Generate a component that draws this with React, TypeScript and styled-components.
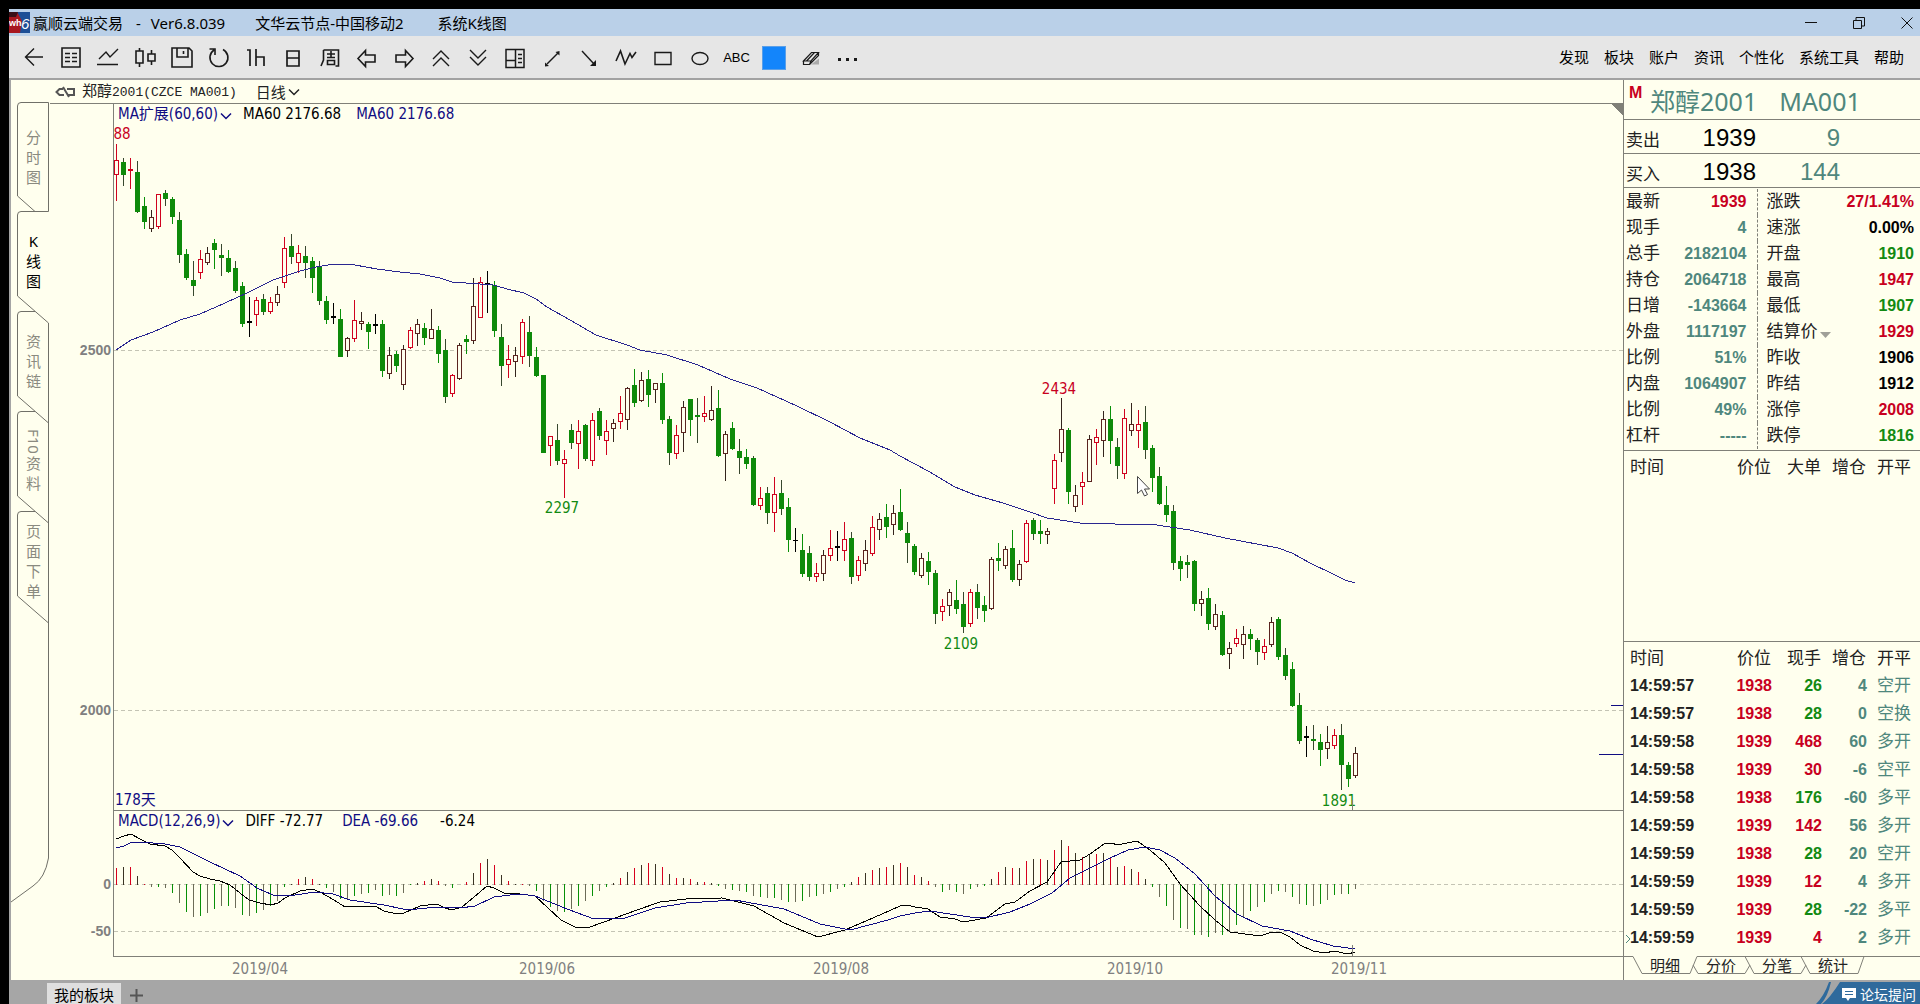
import React from 'react';
import styled, { createGlobalStyle, css } from 'styled-components';

const sans = `"Noto Sans", "Noto Sans CJK SC", sans-serif`;
const tahoma = `"DejaVu Sans Condensed", "DejaVu Sans", "Noto Sans CJK SC", sans-serif`;
const arial = `"Liberation Sans", "Noto Sans CJK SC", sans-serif`;

const color = {
  paper: '#ffffee',
  rule: '#808078',
  red: '#c8001e',
  green: '#128a12',
  teal: '#4f877d',
  navy: '#100c82',
  ink: '#222222',
  black: '#000000',
  dim: '#8a8a80',
};

type Tone = 'red' | 'green' | 'teal' | 'black' | 'ink';

/* ---------- chart data ---------- */

// [high, body top, body bottom, low, kind]; thirds of a pixel below the block's base
type Bar = [number, number, number, number, 'r' | 'g' | 'k'];

const blocks: { base: number; bars: Bar[] }[] = [
  {
    base: 120,
    bars: [
      [72, 121, 163, 240, 'r'], [115, 127, 163, 195, 'g'], [114, 147, 150, 204, 'r'], [123, 156, 273, 277, 'g'],
      [232, 259, 303, 324, 'g'], [271, 291, 326, 333, 'r'], [222, 222, 318, 324, 'r'], [211, 220, 234, 255, 'g'],
      [232, 238, 288, 309, 'g'], [277, 300, 402, 427, 'g'], [388, 403, 471, 477, 'g'], [423, 481, 495, 525, 'g'],
      [391, 418, 456, 474, 'r'], [381, 400, 426, 432, 'r'], [358, 370, 387, 444, 'g'], [373, 406, 412, 465, 'g'],
      [391, 415, 453, 456, 'g'], [423, 444, 510, 516, 'g'], [487, 499, 609, 619, 'g'], [531, 604, 606, 649, 'k'],
      [532, 541, 584, 615, 'r'], [523, 538, 573, 582, 'g'], [532, 547, 573, 579, 'r'], [499, 523, 546, 555, 'r'],
      [352, 385, 486, 501, 'r'], [343, 379, 408, 429, 'g'], [376, 400, 426, 456, 'r'], [379, 409, 426, 471, 'g'],
      [411, 424, 471, 516, 'g'], [424, 439, 540, 552, 'g'], [529, 544, 597, 609, 'g'], [550, 589, 591, 609, 'k'],
      [568, 598, 708, 708, 'g'], [652, 655, 692, 709, 'r'], [541, 601, 654, 664, 'r'], [577, 604, 611, 627, 'r'],
      [606, 613, 633, 686, 'g'], [583, 612, 615, 640, 'k'], [600, 613, 750, 769, 'g'], [682, 706, 759, 775, 'r'],
      [694, 703, 735, 754, 'g'], [676, 688, 793, 808, 'r'], [622, 631, 681, 684, 'r'], [598, 613, 640, 675, 'r'],
      [610, 625, 651, 672, 'g'], [568, 628, 654, 656, 'r'], [619, 631, 699, 727, 'g'], [658, 691, 828, 847, 'g'],
      [762, 766, 819, 828, 'r'], [670, 676, 776, 778, 'r'], [646, 658, 665, 699, 'g'], [475, 559, 662, 669, 'r'],
      [472, 487, 591, 592, 'r'], [454, 491, 494, 577, 'k'], [484, 496, 630, 648, 'g'], [613, 652, 735, 796, 'g'],
      [676, 718, 732, 772, 'r'], [682, 706, 723, 769, 'r'], [598, 607, 708, 729, 'r'], [589, 637, 705, 739, 'g'],
      [682, 712, 766, 769, 'g'],
    ],
  },
  {
    base: 240,
    bars: [
      [406, 406, 636, 636, 'g'], [589, 589, 615, 676, 'r'], [553, 601, 661, 672, 'g'], [631, 659, 669, 772, 'r'],
      [553, 570, 607, 625, 'g'], [541, 574, 609, 684, 'r'], [553, 556, 655, 661, 'g'], [519, 541, 661, 677, 'r'],
      [505, 514, 585, 598, 'g'], [541, 574, 601, 642, 'r'], [538, 550, 565, 604, 'r'], [468, 520, 543, 565, 'r'],
      [442, 445, 538, 568, 'r'], [387, 436, 487, 499, 'g'], [397, 421, 481, 483, 'r'], [391, 418, 462, 499, 'g'],
      [430, 430, 448, 487, 'r'], [400, 430, 538, 550, 'g'], [529, 538, 636, 672, 'g'], [556, 586, 640, 656, 'r'],
      [484, 502, 577, 634, 'r'], [478, 478, 538, 586, 'g'], [474, 526, 530, 607, 'g'], [469, 520, 529, 544, 'r'],
      [439, 511, 538, 541, 'r'], [451, 505, 645, 649, 'g'], [574, 583, 640, 721, 'r'], [546, 565, 625, 628, 'g'],
      [598, 634, 652, 700, 'g'], [628, 651, 669, 685, 'g'], [649, 655, 793, 796, 'g'], [742, 775, 796, 808, 'r'],
      [742, 760, 816, 850, 'g'], [712, 764, 817, 875, 'r'], [721, 760, 804, 823, 'g'], [775, 802, 898, 935, 'g'],
      [865, 900, 902, 935, 'k'], [883, 930, 1000, 1010, 'g'], [920, 940, 1010, 1020, 'g'], [970, 1000, 1010, 1025, 'r'],
      [930, 945, 1000, 1020, 'r'], [871, 925, 945, 960, 'r'], [873, 920, 922, 960, 'k'], [847, 898, 930, 960, 'r'],
      [877, 894, 1010, 1030, 'g'], [950, 960, 1005, 1020, 'r'], [900, 930, 970, 990, 'r'], [829, 862, 940, 945, 'r'],
      [820, 839, 868, 898, 'r'], [793, 832, 858, 892, 'g'], [796, 821, 853, 884, 'r'], [748, 817, 868, 871, 'g'],
    ],
  },
  {
    base: 360,
    bars: [
      [487, 520, 547, 607, 'g'], [553, 559, 633, 643, 'g'], [580, 595, 647, 653, 'r'], [576, 604, 633, 674, 'g'],
      [631, 640, 760, 791, 'g'], [718, 738, 754, 782, 'r'], [688, 697, 737, 767, 'r'], [661, 721, 744, 760, 'g'],
      [697, 733, 799, 817, 'g'], [688, 697, 789, 799, 'r'], [673, 697, 741, 775, 'g'], [709, 737, 751, 785, 'g'],
      [592, 598, 745, 748, 'r'], [550, 596, 600, 631, 'g'], [559, 568, 616, 625, 'r'], [511, 565, 657, 664, 'g'],
      [601, 613, 658, 676, 'r'], [481, 490, 604, 606, 'r'], [475, 481, 520, 538, 'g'], [481, 515, 521, 550, 'g'],
      [505, 515, 523, 550, 'r'], [282, 301, 385, 430, 'r'], [115, 208, 277, 303, 'r'], [205, 211, 394, 430, 'g'],
      [376, 406, 438, 454, 'r'], [337, 367, 379, 433, 'r'], [226, 238, 363, 364, 'r'], [208, 232, 246, 313, 'r'],
      [153, 178, 241, 289, 'r'], [139, 178, 241, 310, 'g'], [235, 262, 316, 355, 'g'], [148, 175, 340, 355, 'r'],
      [129, 193, 210, 226, 'r'], [151, 193, 210, 262, 'r'], [139, 187, 267, 294, 'g'], [256, 265, 352, 394, 'g'],
      [322, 349, 430, 433, 'g'], [379, 436, 462, 483, 'g'], [436, 454, 606, 628, 'g'], [589, 604, 625, 661, 'g'],
      [586, 608, 614, 651, 'g'], [601, 604, 730, 751, 'g'], [694, 718, 730, 767, 'r'], [685, 715, 790, 808, 'g'],
      [733, 763, 799, 807, 'r'], [754, 766, 883, 886, 'g'],
    ],
  },
  {
    base: 540,
    bars: [
      [307, 326, 340, 386, 'r'], [268, 295, 310, 319, 'r'], [259, 283, 314, 355, 'r'], [268, 284, 295, 328, 'g'],
      [295, 301, 335, 374, 'g'], [297, 320, 338, 358, 'r'], [232, 248, 313, 319, 'r'], [232, 237, 349, 358, 'g'],
      [325, 347, 406, 418, 'g'], [367, 388, 496, 499, 'g'], [460, 497, 601, 610, 'g'], [559, 588, 591, 648, 'k'],
      [556, 597, 601, 628, 'g'], [583, 608, 629, 677, 'g'], [559, 608, 626, 654, 'r'], [568, 587, 617, 626, 'r'],
      [553, 587, 674, 748, 'g'], [668, 677, 716, 740, 'g'], [623, 641, 707, 713, 'r'],
    ],
  },
];

const histogram = [
  52, 55, 55, 28, 4, -10, -10, -13, -26, -56, -83, -100, -97, -86, -74, -67, -67, -73, -92, -97, -86, -77, -65, -50, -10,
  4, 19, 25, 19, 4, -13, -23, -46, -47, -37, -29, -26, -17, -35, -33, -35, -26, -4, 6, 13, 19, 13, -7, -13, 0, 10, 37, 65,
  79, 61, 31, 13, 4, 4, -6, -20, -50, -70, -80, -85, -75, -65, -50, -35, -20, -8, 6, 20, 38, 50, 60, 66, 64, 54, 32, 20,
  20, 18, 10, 8, 6, -6, -15, -18, -20, -25, -35, -40, -42, -42, -48, -54, -54, -50, -40, -35, -30, -25, -15, -8, 10, 25,
  35, 45, 50, 55, 60, 65, 55, 31, 25, 13, -10, -23, -19, -23, -31, -16, -10, -7, 19, 40, 55, 52, 52, 73, 79, 79, 76, 106,
  136, 118, 97, 85, 91, 94, 97, 82, 55, 58, 49, 40, 19, -8, -40, -67, -107, -131, -136, -154, -154, -160, -148, -154,
  -144, -124, -103, -82, -70, -55, -29, -22, -25, -40, -61, -64, -65, -61, -49, -34, -31, -31, -16,
];

const ma60 =
  '116,350 131,340 153,332 180,320 200,314 225,303 247,293 273,280 300,271 316,267 334,264 355,265 377,269 400,272 420,274 440,278 452,282 480,284 490,284 507,289 524,293 536,299 547,307 570,320 596,335 627,345 640,350 667,355 698,365 730,379 757,388 797,406 830,422 860,438 890,450 900,456 928,471 955,487 975,495 1003,503 1030,512 1047,518 1080,523 1100,523 1130,525 1150,524 1190,530 1225,538 1278,548 1292,553 1310,563 1333,574 1345,580 1355,583';
const diff =
  '116,839 124,836 131,834 140,839 150,844 165,846 172,850 180,858 193,872 200,876 210,879 220,881 230,885 240,893 249,900 260,903 271,905 278,903 285,898 300,891 312,889 320,892 334,900 345,907 365,906 375,906 384,911 397,914 404,913 420,906 437,904 445,908 452,910 462,907 468,902 480,892 487,886 494,888 504,893 520,894 535,896 561,920 575,927 587,928 604,922 637,910 660,902 686,899 722,898 754,906 784,923 818,937 845,930 882,914 900,906 907,905 915,907 928,909 940,917 955,919 963,922 975,920 986,918 1005,904 1015,902 1030,891 1047,882 1061,862 1080,860 1090,854 1104,844 1112,843 1117,845 1137,841 1150,850 1165,863 1180,884 1200,906 1215,920 1230,932 1245,934 1260,936 1272,932 1282,933 1290,937 1300,945 1313,951 1325,953 1334,951 1348,954 1355,952';
const dea =
  '116,848 124,846 130,843 140,842 165,844 180,847 210,862 240,876 257,888 273,895 295,895 315,892 333,894 350,900 384,905 403,909 417,909 437,907 460,908 475,906 494,897 510,895 520,894 535,896 567,909 594,919 625,918 655,908 686,903 735,900 784,909 820,924 850,930 888,920 900,916 915,913 930,911 970,917 985,918 1010,912 1030,904 1052,893 1070,878 1090,868 1110,858 1128,850 1145,847 1160,850 1175,858 1195,874 1215,896 1237,914 1262,926 1290,931 1310,939 1333,946 1348,948 1355,949';

const bars = blocks.flatMap(({ base, bars: list }) =>
  list.map(([high, top, bottom, low, kind]) => ({
    high: Math.floor(base + high / 3),
    top: Math.floor(base + top / 3),
    bottom: Math.floor(base + bottom / 3),
    low: Math.floor(base + low / 3),
    kind,
  })),
);

const barX = (i: number) => 116 + 7 * i;

/* ---------- page ---------- */

const GlobalStyle = createGlobalStyle`
  * { box-sizing: border-box; }
  body { margin: 0; background: #000; }
  button, select, input { font: inherit; color: inherit; background: none; border: 0; padding: 0; margin: 0; }
  svg { display: block; }
`;

const Frame = styled.div`
  display: flex;
  flex-direction: column;
  min-height: 100vh;
  padding: 9px 0 0 9px;
  background: #000;
  color: ${color.black};
  font: 15px/20px ${sans};
  overflow: hidden;
`;

const TitleBar = styled.header`
  display: flex;
  align-items: center;
  height: 27px;
  background: #bad0e8;
  white-space: pre;
`;

const TitleText = styled.span<{ $gap: number }>`
  margin-left: ${(p) => p.$gap}px;
`;

const WindowButtons = styled.div`
  display: flex;
  gap: 36px;
  margin-left: auto;
  padding-right: 7px;
`;

const ToolBar = styled.nav`
  display: flex;
  align-items: center;
  justify-content: space-between;
  height: 44px;
  padding: 2px 16px 0 6px;
  background: #e6e6e6;
  border-bottom: 2px solid #a2a2a2;
`;

const ToolList = styled.div`
  display: flex;
`;

const Tool = styled.button`
  display: flex;
  align-items: center;
  justify-content: center;
  width: 37px;
  height: 32px;
`;

const ToolWord = styled.span`
  font: 13px/20px ${arial};
`;

const Swatch = styled.span`
  width: 24px;
  height: 24px;
  background: #1385fb;
  border: 1px solid #5a9fe8;
`;

const Menu = styled.div`
  display: flex;
  gap: 15px;
  padding-bottom: 3px;
`;

const Workspace = styled.main`
  display: flex;
  background: ${color.paper};
  border-left: 2px solid #a4a4a4;
`;

const Side = styled.aside`
  position: relative;
  flex: none;
  width: 39px;
  padding-top: 22px;
`;

const SideOutline = styled.svg`
  position: absolute;
  top: 0;
  left: 0;
`;

const SideTab = styled.button<{ $active?: boolean; $first?: boolean }>`
  position: relative;
  display: flex;
  flex-direction: column;
  align-items: center;
  justify-content: center;
  width: 100%;
  height: ${(p) => (p.$first ? 109 : 100)}px;
  padding-left: 6px;
  font-size: 15px;
  line-height: 20px;
  color: ${(p) => (p.$active ? color.black : color.dim)};
`;

const Rotated = styled.span`
  writing-mode: vertical-rl;
  font-size: 15px;
`;

const ChartColumn = styled.section`
  flex: 1;
  min-width: 0;
`;

const ChartHeader = styled.div`
  display: flex;
  align-items: center;
  height: 24px;
  padding-left: 5px;
  border-bottom: 1px solid ${color.rule};
  color: ${color.ink};
`;

const Contract = styled.span`
  margin: 0 19px 0 6px;
  white-space: pre;
`;

const Mono = styled.span`
  font-family: 'Liberation Mono', monospace;
  font-size: 13px;
`;

const Period = styled.select`
  appearance: none;
  width: 32px;
`;

const Pane = styled.div<{ $height: number }>`
  position: relative;
  height: ${(p) => p.$height}px;
  overflow: hidden;
`;

const Plot = styled.svg`
  width: 100%;
  height: 100%;
`;

const Legend = styled.div`
  position: absolute;
  top: 0;
  left: 68px;
  display: flex;
  font: 15px/20px ${tahoma};
  white-space: pre;
`;

const LegendName = styled.button`
  display: flex;
  align-items: center;
  gap: 2px;
  color: ${color.navy};
  svg {
    margin-top: 4px;
  }
`;

const LegendValue = styled.span<{ $gap: number; $navy?: boolean }>`
  margin-left: ${(p) => p.$gap}px;
  color: ${(p) => (p.$navy ? color.navy : color.black)};
`;

const Quote = styled.section`
  display: flex;
  flex-direction: column;
  flex: none;
  width: 297px;
  border-left: 1px solid ${color.rule};
  font-size: 17px;
  color: ${color.ink};
`;

const QuoteTitle = styled.h1`
  display: flex;
  align-items: center;
  gap: 22px;
  height: 40px;
  margin: 0;
  padding: 3px 0 0 5px;
  border-bottom: 1px solid ${color.rule};
  font: 25px/34px ${sans};
  color: ${color.teal};
`;

const MainMark = styled.span`
  align-self: flex-start;
  width: 12px;
  margin-right: -13px;
  font: bold 16px/20px ${arial};
  color: ${color.red};
`;

const PriceLine = styled.div`
  display: flex;
  align-items: center;
  height: 34px;
  padding: 2px 0 0 2px;
  border-bottom: 1px solid ${color.rule};
  font-family: ${arial};
`;

const PriceLabel = styled.span`
  width: 40px;
  padding-top: 6px;
`;

const PriceFigure = styled.span<{ $width: number; $tone: Tone }>`
  width: ${(p) => p.$width}px;
  text-align: right;
  font-size: 24px;
  line-height: 32px;
  color: ${(p) => color[p.$tone]};
`;

const DataTable = styled.table`
  width: 100%;
  table-layout: fixed;
  border-collapse: collapse;
  font-family: ${arial};
  th,
  td {
    padding: 0;
    font-weight: normal;
    text-align: left;
    white-space: nowrap;
  }
`;

const Col = styled.col<{ $width?: number }>`
  width: ${(p) => (p.$width ? `${p.$width}px` : 'auto')};
`;

const QuoteBox = styled.div`
  padding: 1px 0;
`;

const QuoteRow = styled.tr`
  height: 26px;
`;

const QuoteLabel = styled.th`
  && {
    padding-left: 2px;
  }
  & + td + & {
    padding-left: 9px;
  }
`;

const figure = css<{ $tone: Tone }>`
  && {
    text-align: right;
    font-weight: bold;
    font-size: 16px;
    color: ${(p) => color[p.$tone]};
  }
`;

const QuoteValue = styled.td<{ $divider?: boolean; $tone: Tone }>`
  ${figure}
  && {
    padding-right: ${(p) => (p.$divider ? 10 : 6)}px;
    border-right: ${(p) => (p.$divider ? `1px dashed ${color.rule}` : '0')};
  }
`;

const Settle = styled.button`
  display: flex;
  align-items: center;
  gap: 2px;
`;

const Ticks = styled.div<{ $height?: number }>`
  height: ${(p) => (p.$height ? `${p.$height}px` : 'auto')};
  padding-top: 2px;
  border-top: 1px solid ${color.rule};
`;

const TickRow = styled.tr`
  height: 28px;
`;

const TickCell = styled.td<{ $tone: Tone }>`
  ${figure}
`;

const TickTime = styled.td`
  && {
    position: relative;
    padding-left: 6px;
    font-weight: bold;
    font-size: 16px;
  }
`;

const Pointer = styled.svg`
  position: absolute;
  top: 10px;
  left: 1px;
`;

const TickHead = styled.th<{ $align: 'left' | 'right' }>`
  && {
    padding: ${(p) => (p.$align === 'left' ? '2px 0 0 6px' : '2px 1px 0 0')};
    text-align: ${(p) => p.$align};
  }
`;

const Kind = styled.td`
  && {
    padding-left: 10px;
    color: ${color.teal};
  }
`;

const KindHead = styled.th`
  && {
    padding: 2px 0 0 10px;
  }
`;

const TabStrip = styled.div`
  position: relative;
  display: flex;
  height: 24px;
  margin-top: auto;
  padding-left: 13px;
  font-size: 15px;
`;

const TabOutline = styled.svg`
  position: absolute;
  top: 0;
  left: 0;
`;

const Tab = styled.button`
  position: relative;
  width: 56px;
  height: 18px;
  line-height: 18px;
`;

const Footer = styled.footer`
  display: flex;
  justify-content: space-between;
  flex: 1;
  min-height: 24px;
  padding-left: 38px;
  background: #a6a6a6;
`;

const Boards = styled.div`
  display: flex;
  align-items: flex-end;
  gap: 9px;
`;

const BoardTab = styled.button`
  height: 21px;
  padding: 4px 7px 0;
  line-height: 17px;
  background: #dfdfdf;
`;

const AddBoard = styled.button`
  padding-bottom: 2px;
`;

const Forum = styled.button`
  position: relative;
  align-self: flex-end;
`;

const ForumShape = styled.svg`
  position: absolute;
  inset: 0;
  width: 100%;
  height: 100%;
`;

const ForumLabel = styled.span`
  position: relative;
  display: flex;
  align-items: center;
  gap: 4px;
  height: 22px;
  padding: 4px 4px 0 26px;
  font-size: 14px;
  line-height: 16px;
  color: #fff;
`;

/* ---------- small drawings ---------- */

const Chevron = ({ stroke = '#222' }: { stroke?: string }) => (
  <svg width="12" height="8" fill="none" stroke={stroke} strokeWidth="1.5">
    <path d="M1 1.5 6 6.5 11 1.5" />
  </svg>
);

const Icon = ({ children, width = 1.4 }: { children: React.ReactNode; width?: number }) => (
  <svg width="24" height="24" viewBox="0 0 24 24" fill="none" stroke="#1a1a1a" strokeWidth={width}>
    {children}
  </svg>
);

const tools: [string, React.ReactNode][] = [
  ['返回', <Icon><path d="M21 11H4M12 2.500L3.500 11 12 19.500" /></Icon>],
  ['报价', <Icon width={1.6}><path d="M3 2h18v19H3zM6 7.500h5M13 7.500h5M6 11.500h5M13 11.500h5M6 15.500h5M13 15.500h5" /></Icon>],
  ['分时', <Icon><path d="M3 13l7-7 4 5 8-8M1 18.500h21" /></Icon>],
  ['K线', <Icon width={1.6}><path d="M3 5h7v12H3zM6.500 2v3M6.500 17v4M15 8h7v7h-7zM18.500 4v4M18.500 15v4" /></Icon>],
  ['保存', <Icon width={1.6}><path d="M2 2h17l3 3v16H2zM7 2v9h11V2M13.500 5v3" /></Icon>],
  ['刷新', <Icon width={1.6}><path d="M7 4A9 9 0 1 0 16 3.500M2.500 3H8v6" /></Icon>],
  ['1小时', <Icon width={1.7}><path d="M3 4h3v16M12 3v17M12 11h8v9" /></Icon>],
  ['日线', <Icon width={1.7}><path d="M6 5h12v15H6zM6 12h12" /></Icon>],
  ['周线', <Icon width={1.6}><path d="M5.500 4h15v16h-3M5.500 4v10L3 20M9 8h8M9 11.500h8M13 5v6M9.500 14.500h7v4h-7z" /></Icon>],
  ['左移', <Icon width={1.6}><path d="M3 12.500l7.500-8V9H20v7h-9.500v4.500z" /></Icon>],
  ['右移', <Icon width={1.6}><path d="M21 12.500l-7.500-8V9H4v7h9.500v4.500z" /></Icon>],
  ['放大', <Icon><path d="M4 13l8-8 8 8M4 20l8-8 8 8" /></Icon>],
  ['缩小', <Icon><path d="M4 4l8 8 8-8M4 11l8 8 8-8" /></Icon>],
  ['布局', <Icon width={1.5}><path d="M3 3.500h18v18H3zM12.500 3.500v18M3 14.500h9.500M15 8.500h4M15 12.500h4M15 16.500h4" /></Icon>],
  ['线段', <Icon><path d="M7 18L18 7" /><path fill="#1a1a1a" stroke="none" d="M5 20.500v-4l4 3.500zM19.500 5v4.500L15.500 6z" /></Icon>],
  ['射线', <Icon><path d="M5 5l12 13" /><path fill="#1a1a1a" stroke="none" d="M19 20h-6l6-6z" /></Icon>],
  ['折线', <Icon width={1.6}><path d="M2 15L6.500 5 11 18 16 7.500l2 4L22 6" /></Icon>],
  ['矩形', <Icon><path d="M4 6.500h16v12H4z" /></Icon>],
  ['椭圆', <Icon><ellipse cx="12" cy="12.500" rx="8" ry="6" /></Icon>],
];

const Toolbox = () => (
  <ToolList>
    {tools.map(([name, icon]) => (
      <Tool key={name} aria-label={name}>{icon}</Tool>
    ))}
    <Tool><ToolWord>ABC</ToolWord></Tool>
    <Tool aria-label="颜色"><Swatch /></Tool>
    <Tool aria-label="橡皮擦">
      <Icon width={1.2}>
        <path fill="#aaa" stroke="none" d="M12 18.500l8-6v6z" />
        <path fill="#e6e6e6" d="M4.500 15L12.500 6.500h7L12 15zM4.500 15v3.500h6L12 15M10.500 18.500L19.500 9.500v-3M7.500 15l8-8.500" />
      </Icon>
    </Tool>
    <Tool aria-label="更多">
      <Icon><path fill="#1a1a1a" stroke="none" d="M2 12h3v3H2zM10 12h3v3h-3zM18 12h3v3h-3z" /></Icon>
    </Tool>
  </ToolList>
);

/* ---------- chart ---------- */

const Candles = () => (
  <g shapeRendering="crispEdges">
    {bars.map((b, i) => {
      const x = barX(i);
      const odd = i % 2 === 1;
      const up = b.kind === 'r';
      const wick = b.kind === 'k' ? '#000' : odd ? (up ? '#33241c' : '#38472e') : up ? '#d0021f' : '#089008';
      const edge = odd ? '#5a2420' : '#d0021f';
      const height = Math.max(1, b.bottom - b.top + 1);
      return (
        <g key={i}>
          <rect x={x} y={b.high} width="1" height={Math.max(1, b.low - b.high + 1)} fill={wick} />
          {up && height > 2 ? (
            <rect x={x - 1.5} y={b.top + 0.5} width="4" height={height - 1} fill={color.paper} stroke={edge} />
          ) : (
            <rect x={x - 2} y={b.top} width="5" height={height} fill={up ? edge : b.kind === 'k' ? '#000' : '#0e8a0a'} />
          )}
        </g>
      );
    })}
  </g>
);

const Grid = ({ y }: { y: number }) => (
  <line x1="64" x2="100%" y1={y} y2={y} stroke="#c4c4b4" strokeDasharray="4 3" shapeRendering="crispEdges" />
);

const Scale = styled.text`
  font: bold 14px ${arial};
  fill: #808080;
  text-anchor: end;
`;

const Mark = styled.text<{ $fill: string }>`
  font: 15px ${tahoma};
  fill: ${(p) => p.$fill};
  text-anchor: middle;
`;

const Days = styled.text`
  font: 15px ${tahoma};
  fill: ${color.navy};
`;

const PricePane = () => (
  <Pane $height={707}>
    <Plot>
      <Grid y={246.5} />
      <Grid y={606.5} />
      <Scale x="61" y="251">2500</Scale>
      <Scale x="61" y="611">2000</Scale>
      <rect x="63" width="1" height="100%" fill={color.rule} />
      <g transform="translate(-50 -104)">
        <Candles />
        <polyline points={ma60} fill="none" stroke="#2a2690" shapeRendering="crispEdges" />
        <Mark x="122" y="139" $fill={color.red}>88</Mark>
        <Mark x="562" y="513" $fill={color.green}>2297</Mark>
        <Mark x="961" y="649" $fill={color.green}>2109</Mark>
        <Mark x="1059" y="394" $fill={color.red}>2434</Mark>
        <Mark x="1339" y="806" $fill={color.green}>1891</Mark>
        <Days x="115" y="805">178天</Days>
        <rect x="1352" y="800" width="1" height="10" fill={color.rule} />
        <path d="M1137.500 476.500v17l4-3.500 3 6 3-1.500-3-5.500h5z" fill="#fff" stroke="#444" />
      </g>
      <svg x="100%" overflow="visible" shapeRendering="crispEdges">
        <path d="M-12 0H0V12z" fill={color.rule} />
        <path d="M-12 601.500H0M-24 650.500H0" stroke={color.navy} />
      </svg>
      <rect x="63" y="706" width="100%" height="1" fill={color.rule} />
    </Plot>
    <Legend>
      <LegendName>MA扩展(60,60)<Chevron stroke={color.navy} /></LegendName>
      <LegendValue $gap={11}>MA60 2176.68</LegendValue>
      <LegendValue $gap={15} $navy>MA60 2176.68</LegendValue>
    </Legend>
  </Pane>
);

const MacdPane = () => (
  <Pane $height={146}>
    <Plot>
      <Grid y={73.5} />
      <Grid y={120.5} />
      <Scale x="61" y="78">0</Scale>
      <Scale x="61" y="125">-50</Scale>
      <rect x="63" width="1" height="100%" fill={color.rule} />
      <g transform="translate(-50 -811)" shapeRendering="crispEdges">
        {histogram.map((v, i) => {
          const h = Math.round(Math.abs(v) / 3);
          const odd = i % 2 === 1;
          const fill = v > 0 ? (odd ? '#3a3324' : '#d8001e') : odd ? '#6c6c58' : '#089008';
          return <rect key={i} x={barX(i)} y={v > 0 ? 885 - h : 884} width="1" height={h} fill={fill} />;
        })}
        <polyline points={diff} fill="none" stroke="#000" />
        <polyline points={dea} fill="none" stroke={color.navy} />
        <rect x="1352" y="945" width="1" height="11" fill={color.rule} />
      </g>
      <rect x="63" y="145" width="100%" height="1" fill={color.rule} />
    </Plot>
    <Legend>
      <LegendName>MACD(12,26,9)<Chevron stroke={color.navy} /></LegendName>
      <LegendValue $gap={11}>DIFF -72.77</LegendValue>
      <LegendValue $gap={19} $navy>DEA -69.66</LegendValue>
      <LegendValue $gap={22}>-6.24</LegendValue>
    </Legend>
  </Pane>
);

const dates: [number, string][] = [
  [210, '2019/04'], [497, '2019/06'], [791, '2019/08'], [1085, '2019/10'], [1309, '2019/11'],
];

const DateAxis = () => (
  <Pane $height={23}>
    <Plot>
      {dates.map(([x, label]) => (
        <Mark key={label} x={x} y="17" $fill="#808080">{label}</Mark>
      ))}
    </Plot>
  </Pane>
);

/* ---------- quote panel ---------- */

const quotes: [string, string, Tone, string, string, Tone][] = [
  ['最新', '1939', 'red', '涨跌', '27/1.41%', 'red'],
  ['现手', '4', 'teal', '速涨', '0.00%', 'black'],
  ['总手', '2182104', 'teal', '开盘', '1910', 'green'],
  ['持仓', '2064718', 'teal', '最高', '1947', 'red'],
  ['日增', '-143664', 'teal', '最低', '1907', 'green'],
  ['外盘', '1117197', 'teal', '结算价', '1929', 'red'],
  ['比例', '51%', 'teal', '昨收', '1906', 'black'],
  ['内盘', '1064907', 'teal', '昨结', '1912', 'black'],
  ['比例', '49%', 'teal', '涨停', '2008', 'red'],
  ['杠杆', '-----', 'teal', '跌停', '1816', 'green'],
];

const trades: [string, number, number, Tone, number, string][] = [
  ['14:59:57', 1938, 26, 'green', 4, '空开'],
  ['14:59:57', 1938, 28, 'green', 0, '空换'],
  ['14:59:58', 1939, 468, 'red', 60, '多开'],
  ['14:59:58', 1939, 30, 'red', -6, '空平'],
  ['14:59:58', 1938, 176, 'green', -60, '多平'],
  ['14:59:59', 1939, 142, 'red', 56, '多开'],
  ['14:59:59', 1938, 28, 'green', 20, '空开'],
  ['14:59:59', 1939, 12, 'red', 4, '多开'],
  ['14:59:59', 1939, 28, 'green', -22, '多平'],
  ['14:59:59', 1939, 4, 'red', 2, '多开'],
];

const TickColumns = () => (
  <colgroup>
    <Col />
    <Col $width={50} />
    <Col $width={50} />
    <Col $width={45} />
    <Col $width={53} />
  </colgroup>
);

const TickHeader = ({ volume }: { volume: string }) => (
  <thead>
    <TickRow>
      <TickHead $align="left">时间</TickHead>
      <TickHead $align="right">价位</TickHead>
      <TickHead $align="right">{volume}</TickHead>
      <TickHead $align="right">增仓</TickHead>
      <KindHead>开平</KindHead>
    </TickRow>
  </thead>
);

const QuotePanel = () => (
  <Quote>
    <QuoteTitle>
      <MainMark>M</MainMark>
      <span>郑醇2001</span>
      <span>MA001</span>
    </QuoteTitle>
    <PriceLine>
      <PriceLabel>卖出</PriceLabel>
      <PriceFigure $width={90} $tone="black">1939</PriceFigure>
      <PriceFigure $width={84} $tone="teal">9</PriceFigure>
    </PriceLine>
    <PriceLine>
      <PriceLabel>买入</PriceLabel>
      <PriceFigure $width={90} $tone="black">1938</PriceFigure>
      <PriceFigure $width={84} $tone="teal">144</PriceFigure>
    </PriceLine>
    <QuoteBox>
      <DataTable>
        <colgroup>
          <Col $width={44} />
          <Col $width={89} />
          <Col $width={80} />
          <Col />
        </colgroup>
        <tbody>
          {quotes.map(([l1, v1, t1, l2, v2, t2], i) => (
            <QuoteRow key={i}>
              <QuoteLabel scope="row">{l1}</QuoteLabel>
              <QuoteValue $divider $tone={t1}>{v1}</QuoteValue>
              <QuoteLabel scope="row">
                {l2 === '结算价' ? (
                  <Settle>
                    {l2}
                    <svg width="11" height="14" fill="#a0a098"><path d="M0 7h11L5.500 13z" /></svg>
                  </Settle>
                ) : (
                  l2
                )}
              </QuoteLabel>
              <QuoteValue $tone={t2}>{v2}</QuoteValue>
            </QuoteRow>
          ))}
        </tbody>
      </DataTable>
    </QuoteBox>
    <Ticks $height={191}>
      <DataTable>
        <TickColumns />
        <TickHeader volume="大单" />
      </DataTable>
    </Ticks>
    <Ticks>
      <DataTable>
        <TickColumns />
        <TickHeader volume="现手" />
        <tbody>
          {trades.map(([time, price, volume, tone, change, kind], i) => (
            <TickRow key={i}>
              <TickTime>
                {i === trades.length - 1 && (
                  <Pointer width="6" height="10" fill="none" stroke={color.teal}>
                    <path d="M1 1l4 4-4 4" />
                  </Pointer>
                )}
                {time}
              </TickTime>
              <TickCell $tone="red">{price}</TickCell>
              <TickCell $tone={tone}>{volume}</TickCell>
              <TickCell $tone="teal">{change}</TickCell>
              <Kind>{kind}</Kind>
            </TickRow>
          ))}
        </tbody>
      </DataTable>
    </Ticks>
    <TabStrip>
      <TabOutline width="297" height="20" fill="none" stroke={color.rule}>
        <path d="M0 .5H9L18 17.500H66L73 .5H297M69 9L74 17.500H121L126 9M121 .5L130 17.500H177L182 9M177 .5L186 17.500H234L240 .5" />
        <path d="M10 .5H72" stroke={color.paper} />
      </TabOutline>
      <Tab>明细</Tab>
      <Tab>分价</Tab>
      <Tab>分笔</Tab>
      <Tab>统计</Tab>
    </TabStrip>
  </Quote>
);

const Upright = ({ text }: { text: string }) => (
  <>
    {[...text].map((c) => (
      <span key={c}>{c}</span>
    ))}
  </>
);

export default function App() {
  return (
    <Frame>
      <GlobalStyle />
      <TitleBar>
        <svg width="21" height="21" viewBox="0 0 21 21">
          <rect width="21" height="21" fill="#1d4f96" />
          <path d="M0 0h8l5 9-2 12H0z" fill="#a81820" />
          <path d="M0 0h9L7 5H0z" fill="#3a1018" />
          <text x="0" y="14" fill="#fff" fontSize="9" fontWeight="bold" fontFamily="Liberation Sans">wh</text>
          <text x="12" y="17" fill="#fff" fontSize="15" fontStyle="italic" fontFamily="Liberation Sans">6</text>
        </svg>
        <TitleText $gap={3}>赢顺云端交易</TitleText>
        <TitleText $gap={13}>-</TitleText>
        <TitleText $gap={10}>Ver6.8.039</TitleText>
        <TitleText $gap={30}>文华云节点-中国移动2</TitleText>
        <TitleText $gap={34}>系统K线图</TitleText>
        <WindowButtons>
          <button aria-label="最小化">
            <svg width="12" height="12" stroke="#111"><path d="M0 5.500h12" /></svg>
          </button>
          <button aria-label="还原">
            <svg width="12" height="12" fill="none" stroke="#111"><path d="M.5 3.500h8v8h-8zM3 3V.5h8.500V9H9" /></svg>
          </button>
          <button aria-label="关闭">
            <svg width="12" height="12" stroke="#111"><path d="M.5.5l11 11M11.500.5l-11 11" /></svg>
          </button>
        </WindowButtons>
      </TitleBar>
      <ToolBar>
        <Toolbox />
        <Menu>
          {['发现', '板块', '账户', '资讯', '个性化', '系统工具', '帮助'].map((name) => (
            <button key={name}>{name}</button>
          ))}
        </Menu>
      </ToolBar>
      <Workspace>
        <Side>
          <SideOutline width="39" height="830" fill="none" stroke="#707068">
            <path d="M6.500 26Q6.500 22.500 10 22.500H37.500V131.500H10Q6.500 131.500 6.500 135V216L37.500 243V778Q34 798 22 806L0 822" />
            <path d="M6.500 26V116L24 131.500M24 231.500H10Q6.500 231.500 6.500 235V316L37.500 343M24 331.500H10Q6.500 331.500 6.500 335V416L37.500 443M24 431.500H10Q6.500 431.500 6.500 435V516L37.500 543" />
          </SideOutline>
          <SideTab $first><Upright text="分时图" /></SideTab>
          <SideTab $active><Upright text="K线图" /></SideTab>
          <SideTab><Upright text="资讯链" /></SideTab>
          <SideTab><Rotated>F10</Rotated><Upright text="资料" /></SideTab>
          <SideTab><Upright text="页面下单" /></SideTab>
        </Side>
        <ChartColumn>
          <ChartHeader>
            <svg width="21" height="14" fill="none" stroke="#555" strokeWidth="2">
              <path d="M8 4H4.500L1.500 7l3 3H9M12 4h7v6h-6M8 2l6 10" />
            </svg>
            <Contract>郑醇<Mono>2001(CZCE MA001)</Mono></Contract>
            <Period aria-label="周期"><option>日线</option></Period>
            <Chevron />
          </ChartHeader>
          <PricePane />
          <MacdPane />
          <DateAxis />
        </ChartColumn>
        <QuotePanel />
      </Workspace>
      <Footer>
        <Boards>
          <BoardTab>我的板块</BoardTab>
          <AddBoard aria-label="添加板块">
            <svg width="13" height="13" stroke="#555" strokeWidth="2"><path d="M0 6.500h13M6.500 0v13" /></svg>
          </AddBoard>
        </Boards>
        <Forum>
          <ForumShape viewBox="0 0 104 22" preserveAspectRatio="none">
            <path d="M24 0H104V22H6Q14 16 24 0z" fill="#2f6a9c" />
            <path d="M13 0Q8 14 0 22H5Q12 14 15 0z" fill="#2f6a9c" />
          </ForumShape>
          <ForumLabel>
            <svg width="14" height="14">
              <path d="M0 0h14v10H8l-2 3-2-3H0z" fill="#fff" />
              <path d="M3 3.500h8M3 6.500h8" stroke="#2f6a9c" />
            </svg>
            论坛提问
          </ForumLabel>
        </Forum>
      </Footer>
    </Frame>
  );
}
